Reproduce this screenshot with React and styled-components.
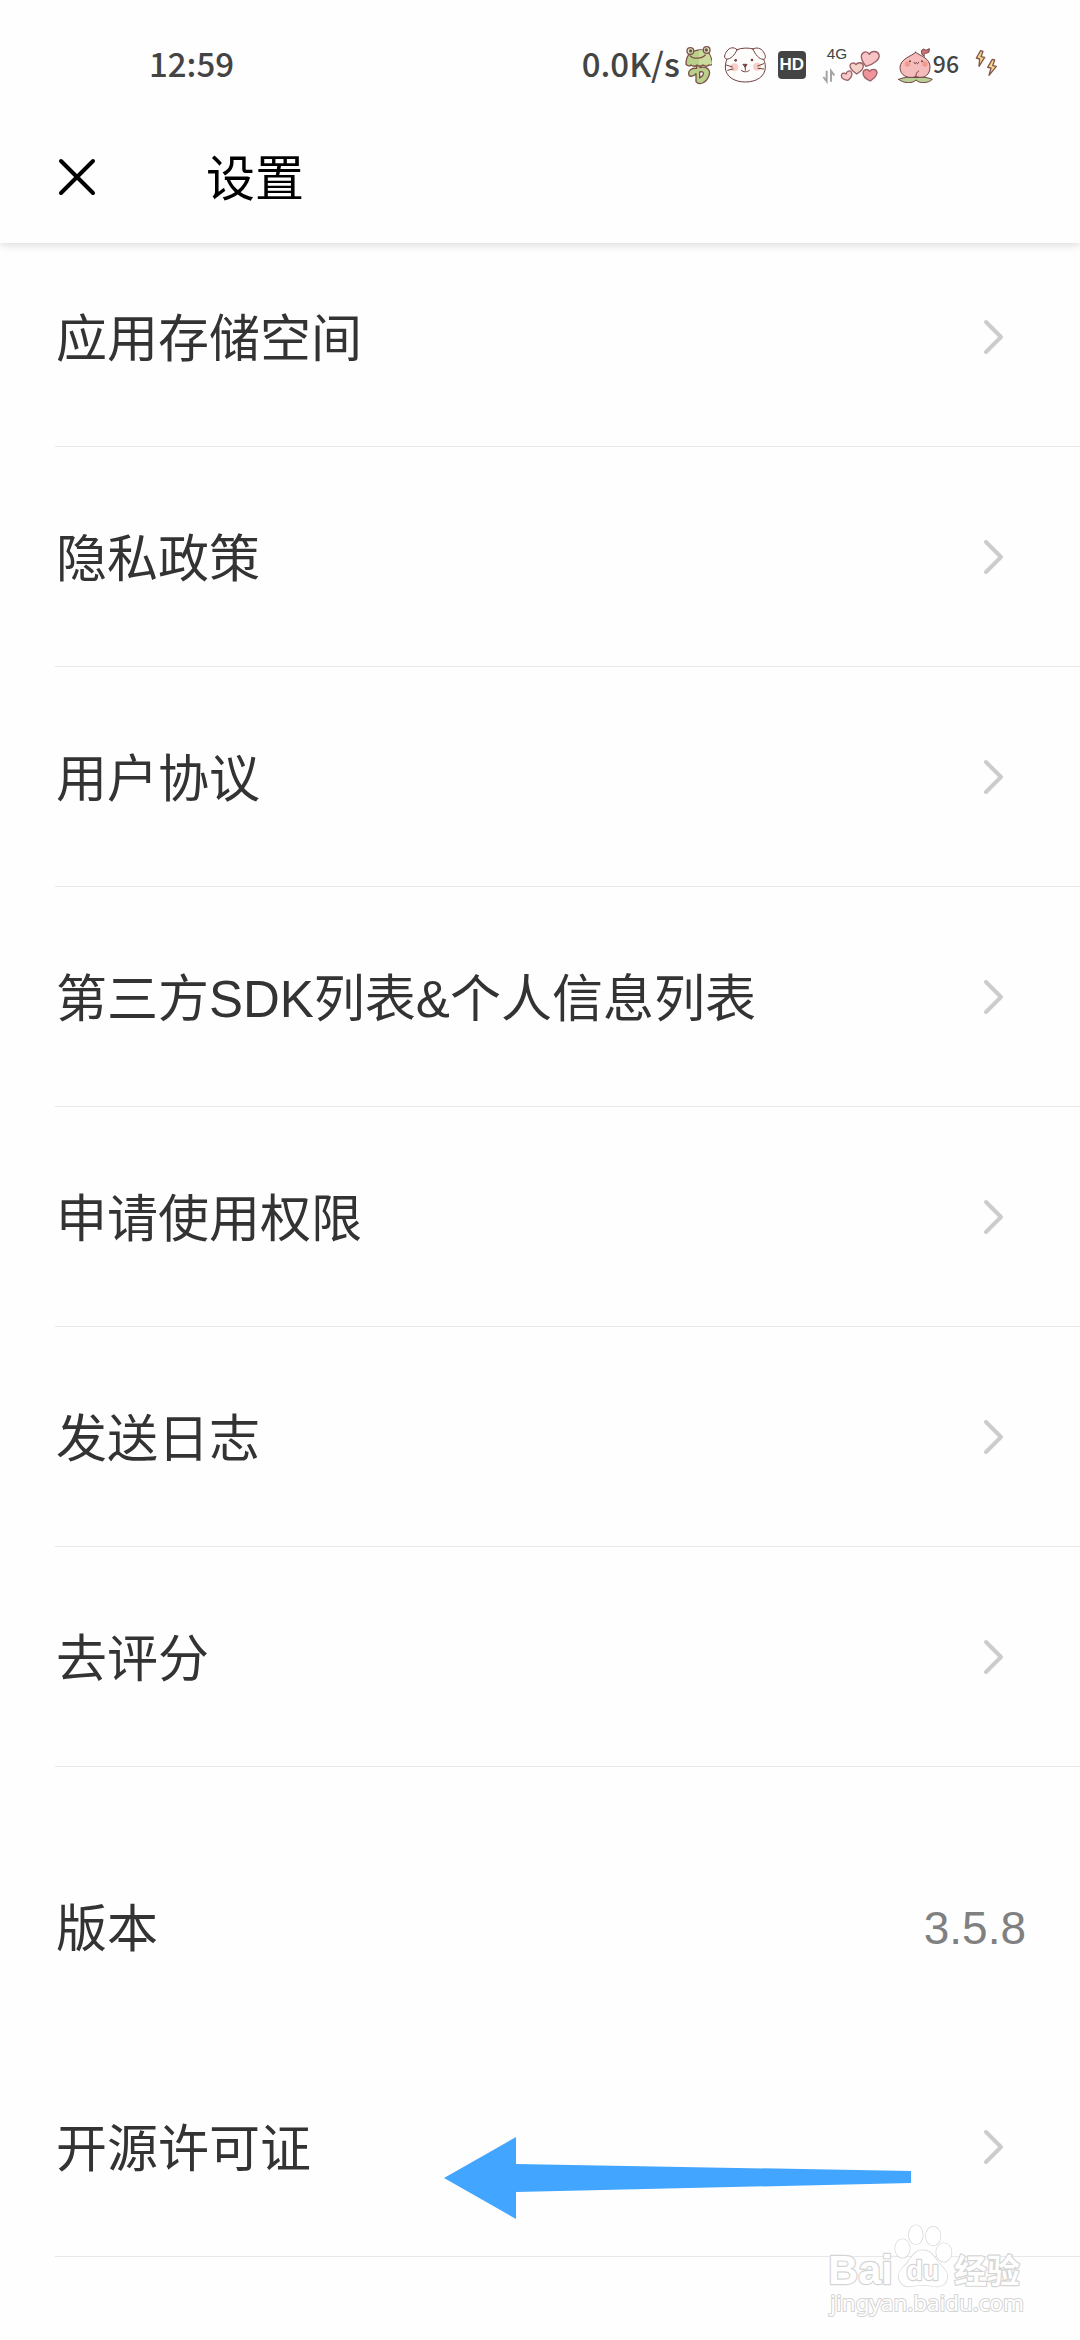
import React from 'react';
import styled, { createGlobalStyle } from 'styled-components';

const GlobalStyle = createGlobalStyle`
    * {
        box-sizing: border-box;
    }
    body {
        margin: 0;
        background-color: #fefefe;
        font-family: 'Noto Sans CJK SC', sans-serif;
    }
`;

const Page = styled.div`
    position: relative;
    width: 100%;
    min-height: 100vh;
    overflow: hidden;
`;

const Header = styled.header`
    position: sticky;
    top: 0;
    z-index: 1;
    background-color: #fefefe;
    box-shadow: 0 2px 8px rgba(0, 0, 0, 0.14);
`;

const StatusBar = styled.div`
    height: 111px;
    padding: 18px 82px 0 149px;
    display: flex;
    align-items: center;
    justify-content: space-between;
    color: #444444;
    font-weight: 500;
`;

const StatusGroup = styled.div`
    display: flex;
    align-items: center;
    gap: ${({ $gap }) => $gap}px;
`;

const StatusText = styled.span`
    padding-bottom: 4px;
    font-size: ${({ $small }) => ($small ? '23px' : '33px')};
`;

const HdBadge = styled.span`
    width: 28px;
    height: 28px;
    border-radius: 4px;
    display: flex;
    align-items: center;
    justify-content: center;
    background-color: #444444;
    color: #ffffff;
    font-family: 'Liberation Sans', sans-serif;
    font-size: 17px;
    font-weight: 700;
`;

const TitleBar = styled.div`
    height: 132px;
    padding-left: 55px;
    display: flex;
    align-items: center;
    gap: 107px;
`;

const CloseButton = styled.button`
    width: 44px;
    height: 44px;
    padding: 0;
    border: 0;
    background: none;
    display: flex;
    align-items: center;
    justify-content: center;
    cursor: pointer;
`;

const Title = styled.h1`
    margin: 0;
    padding-bottom: 4px;
    color: #000000;
    font-size: 49px;
    font-weight: 400;
    line-height: 60px;
`;

/* the first row slides a little under the header */
const List = styled.ul`
    list-style: none;
    margin: -16px 0 0;
    padding: 0 0 0 55px;
`;

const Item = styled.li`
    position: relative;
    height: 220px;
    margin-top: ${({ $spaced }) => ($spaced ? '50px' : '0')};
    border-bottom: 1px solid ${({ $plain }) => ($plain ? 'transparent' : '#e8e8e8')};
`;

const Row = styled.div`
    height: 100%;
    padding: 0 ${({ $end }) => $end}px 0 1px;
    display: flex;
    align-items: center;
    justify-content: space-between;
    color: #333333;
    font-family: 'Liberation Sans', 'Noto Sans CJK SC', sans-serif;
    font-size: 51px;
    line-height: 60px;
    text-decoration: none;
`;

const Label = styled.span`
    padding-top: 6px;
`;

const Version = styled.span`
    padding-top: 2px;
    color: #808080;
    font-size: 46px;
`;

const Pointer = styled.svg`
    position: absolute;
    top: 100px;
    left: 389px;
`;

const Watermark = styled.svg`
    position: absolute;
    right: 56px;
    bottom: 21px;
    overflow: visible;
`;

const FrogIcon = () => (
    <svg width="28" height="40" viewBox="0 0 84 120" fill="#b9d08b" stroke="#7c5148" strokeWidth="4" strokeLinejoin="round" aria-hidden="true">
        <path d="M38 62v8c-14-2-26 6-24 18 1 8 14 8 22-2v24c10 12 30 4 38-16 8-18-4-32-26-26v-6z" />
        <path d="M47 81c14-4 16 8 0 18z" fill="#ffffff" />
        <path d="M15 28C6 38 6 50 6 58c6 6 12 6 15 2 6 5 14 5 18 0 6 5 14 5 18 0 6 4 14 4 18 0 4 1 8 0 11-3-1-12-6-22-11-32C63 10 32 12 15 28z" />
        <path d="M45 16c16-2 26 4 30 12 5 8 8 20 8 28-4 3-7 2-9 0-5 4-12 4-17 0-4 2-8 3-12 2z" fill="#cbdc9f" stroke="none" />
        <circle cx="19" cy="18" r="10" fill="#ddebc4" />
        <circle cx="68" cy="15" r="10" fill="#ddebc4" />
        <circle cx="20" cy="18" r="3" fill="#553b36" />
        <circle cx="67" cy="15" r="3" fill="#553b36" />
        <path d="M17 31c9 12 38 11 48-2" fill="none" />
    </svg>
);

const BearIcon = () => (
    <svg width="44" height="40" viewBox="0 0 132 120" fill="#fffdfb" stroke="#70403f" strokeWidth="3" strokeLinecap="round" strokeLinejoin="round" aria-hidden="true">
        <path d="M42 14C56 8 78 8 90 12c24 10 37 32 37 54 0 28-26 45-60 45S7 94 7 66c0-22 12-42 35-52z" />
        <path d="M42 14C32 4 19 8 12 18 4 28 2 40 10 42c12 2 26-12 32-28zM90 12c10-6 24-3 31 8 8 12 8 22 0 23-12 0-25-14-31-31z" />
        <circle cx="34" cy="67" r="12" fill="#f7cfc8" stroke="none" />
        <circle cx="102" cy="65" r="12" fill="#f7cfc8" stroke="none" />
        <circle cx="38" cy="46" r="4" fill="#70403f" stroke="none" />
        <circle cx="87" cy="45" r="4" fill="#70403f" stroke="none" />
        <path d="M61 58h11l-5 8z" fill="#70403f" />
        <path d="M67 66v10M55 76c6 6 18 6 24 0M10 60l18 6M14 76l16-4M122 56l-18 7M122 72l-17-2" fill="none" />
    </svg>
);

const SignalIcon = () => (
    <svg width="60" height="38" viewBox="0 0 180 114" overflow="visible" aria-label="4G">
        <text x="14" y="39" fontFamily="'Liberation Sans', sans-serif" fontSize="46" fontWeight="400" fill="#444444">4G</text>
        <path d="M14 74v32L4 93M27 107V75l10 13" fill="none" stroke="#a5a5a5" strokeWidth="6" />
        <g stroke="#9a6264" strokeWidth="4" strokeLinejoin="round">
            <path d="M132 61c-9-11-15-21-14-31 2-13 17-17 24-5 6-12 25-11 29 1 4 14-16 29-39 35z" fill="#f8c4c6" />
            <path d="M104 84c-10-7-20-15-20-24 0-10 13-12 18-4 5-9 20-7 22 2 2 9-9 19-20 26z" fill="#f6d3c8" />
            <path d="M78 103c-9-1-21-5-20-14 1-8 9-10 14-5 1-9 14-13 17-4 3 8-4 17-11 23z" fill="#f8c9cb" />
            <path d="M145 105c-11-5-23-13-22-24 1-12 14-14 20-5 6-9 20-8 22 3 1 10-10 19-20 26z" fill="#ef949b" />
        </g>
    </svg>
);

const PeachIcon = () => (
    <svg width="35" height="36" viewBox="0 0 105 108" strokeLinecap="round" strokeLinejoin="round" aria-hidden="true">
        <g stroke="#70403f" strokeWidth="3">
            <path d="M2 97c12-6 34-8 52-5 18-3 36-1 49 5-12 12-38 14-49 2-12 13-40 9-52-2z" fill="#b9cf95" />
            <path d="M53 16c-13 12-47 20-47 46 0 22 22 35 48 27 26 8 42-7 42-29 0-26-25-31-43-44z" fill="#f6bcbc" />
            <path d="M72 22c-3-8-2-13 4-16l8 4 10-5-1 10-8 4c-8-2-7 5-6 8z" fill="#cf7379" />
            <path d="M54 90c-1-8 1-14 8-18" fill="none" />
            <path d="M48 46c1 6 6 5 7 0 1 5 6 6 7 0" fill="none" />
        </g>
        <circle cx="28" cy="51" r="8" fill="#f09b8b" />
        <circle cx="81" cy="51" r="8" fill="#f09b8b" />
        <circle cx="36" cy="43" r="3" fill="#70403f" />
        <circle cx="72" cy="43" r="3" fill="#70403f" />
    </svg>
);

const BoltsIcon = () => (
    <svg width="23" height="34" viewBox="0 0 69 102" fill="#f9dc8b" stroke="#80574f" strokeWidth="4" strokeLinejoin="round" aria-hidden="true">
        <path d="M17 8L4 30l10 3-2 22 17-27-11-2 6-16z" />
        <path d="M52 34L38 58l10 2-6 22 22-27-11-2 6-17z" />
    </svg>
);

const CloseIcon = () => (
    <svg width="40" height="40" viewBox="0 0 40 40" fill="none" stroke="#000000" strokeWidth="4" strokeLinecap="round" aria-hidden="true">
        <path d="M4 4l32 32M36 4L4 36" />
    </svg>
);

const Chevron = () => (
    <svg width="24" height="40" viewBox="0 0 24 40" fill="none" stroke="#cccccc" strokeWidth="4" strokeLinecap="round" strokeLinejoin="round" aria-hidden="true">
        <path d="M4 5l15 15L4 35" />
    </svg>
);

const items = [
    { id: 'storage', label: '应用存储空间' },
    { id: 'privacy', label: '隐私政策' },
    { id: 'agreement', label: '用户协议' },
    { id: 'sdk', label: '第三方SDK列表&个人信息列表' },
    { id: 'permissions', label: '申请使用权限' },
    { id: 'logs', label: '发送日志' },
    { id: 'rate', label: '去评分' },
    { id: 'version', label: '版本', value: '3.5.8' },
    { id: 'license', label: '开源许可证', pointed: true },
];

const App = () => {
    return (
        <Page>
            <GlobalStyle />
            <Header>
                <StatusBar>
                    <StatusText>12:59</StatusText>
                    <StatusGroup $gap={16}>
                        <StatusGroup $gap={11}>
                            <StatusGroup $gap={4}>
                                <StatusText>0.0K/s</StatusText>
                                <FrogIcon />
                            </StatusGroup>
                            <BearIcon />
                            <HdBadge>HD</HdBadge>
                        </StatusGroup>
                        <StatusGroup $gap={16}>
                            <SignalIcon />
                            <StatusGroup $gap={0}>
                                <PeachIcon />
                                <StatusText $small>96</StatusText>
                            </StatusGroup>
                            <BoltsIcon />
                        </StatusGroup>
                    </StatusGroup>
                </StatusBar>
                <TitleBar>
                    <CloseButton type="button" aria-label="关闭">
                        <CloseIcon />
                    </CloseButton>
                    <Title>设置</Title>
                </TitleBar>
            </Header>

            <List>
                {items.map((item) => (
                    <Item key={item.id} $spaced={!!item.value} $plain={!!item.value}>
                        {item.value ? (
                            <Row $end={54}>
                                <Label>{item.label}</Label>
                                <Version>{item.value}</Version>
                            </Row>
                        ) : (
                            <Row as="a" href={`#${item.id}`} $end={74}>
                                <Label>{item.label}</Label>
                                <Chevron />
                            </Row>
                        )}
                        {item.pointed && (
                            <Pointer width="467" height="82" viewBox="0 0 467 82" aria-hidden="true">
                                <path d="M0 41L72 0v27l395 7v12L72 55v27z" fill="#42a5ff" />
                            </Pointer>
                        )}
                    </Item>
                ))}
            </List>

            <Watermark
                width="197"
                height="97"
                viewBox="0 0 590 290"
                fill="#ffffff"
                stroke="#d4d4d4"
                strokeWidth="7"
                strokeLinejoin="round"
                paintOrder="stroke"
                fontFamily="'Noto Sans', 'Noto Sans CJK SC', sans-serif"
            >
                <text x="4" y="184" fontFamily="'Liberation Sans', sans-serif" fontSize="124" fontWeight="700">Bai</text>
                <ellipse cx="226" cy="79" rx="22" ry="28" strokeWidth="4" />
                <ellipse cx="266" cy="38" rx="21" ry="29" strokeWidth="4" />
                <ellipse cx="318" cy="42" rx="22" ry="28" strokeWidth="4" />
                <ellipse cx="350" cy="91" rx="23" ry="28" strokeWidth="4" />
                <path d="M286 84c22 0 32 14 44 32s30 26 30 46c0 26-22 34-42 30-22-4-42-4-62 0-24 4-42-8-41-32 1-18 18-26 29-42s20-34 42-34z" strokeWidth="4" />
                <text x="238" y="172" fontFamily="'Liberation Sans', sans-serif" fontSize="80" fontWeight="700">du</text>
                <text x="381" y="182" fontSize="98" fontWeight="700">经验</text>
                <text x="10" y="266" fontSize="67" fontWeight="400" strokeWidth="6">jingyan.baidu.com</text>
            </Watermark>
        </Page>
    );
};

export default App;
